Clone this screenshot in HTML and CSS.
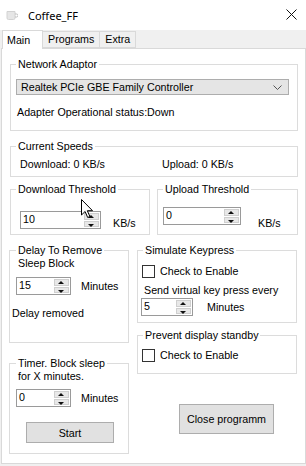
FILE: index.html
```html
<!DOCTYPE html>
<html>
<head>
    <title>Coffee_FF</title>
    <link rel="stylesheet" href="styles.css">
</head>
<body>
<div class="window">
    <div class="titlebar">
        <svg class="app-icon" width="12" height="9" viewBox="0 0 12 9">
            <path d="M1 0.5h8v6.5a1.5 1.5 0 0 1-1.5 1.5h-5a1.5 1.5 0 0 1-1.5-1.5z" fill="#e6e6e6" stroke="#d2d2d2"/>
            <path d="M9 3h1.5a1 1 0 0 1 0 3h-1.5" fill="none" stroke="#bdbdbd"/>
        </svg>
        <span class="title">Coffee_FF</span>
        <svg class="close" width="11" height="11" viewBox="0 0 11 11">
            <path d="M0.5 0.5l10 10M10.5 0.5l-10 10" stroke="#111" stroke-width="1"/>
        </svg>
    </div>

    <div class="tabs">
        <div class="tab active">Main</div>
        <div class="tab">Programs</div>
        <div class="tab">Extra</div>
    </div>

    <div class="panel">
        <!-- network adaptor -->
        <div class="group net">
            <div class="legend">Network Adaptor</div>
            <div class="combo">
                <span>Realtek PCIe GBE Family Controller</span>
                <svg width="9" height="5" viewBox="0 0 9 5"><path d="M0.5 0.5l4 4 4-4" fill="none" stroke="#555"/></svg>
            </div>
            <div class="status">Adapter Operational status:Down</div>
        </div>

        <!-- current speeds -->
        <div class="group speeds">
            <div class="legend">Current Speeds</div>
            <div class="speed-row">
                <span class="dl">Download: 0 KB/s</span>
                <span>Upload: 0 KB/s</span>
            </div>
        </div>

        <!-- thresholds -->
        <div class="threshold-row">
            <div class="group thr-down">
                <div class="legend">Download Threshold</div>
                <div class="field">
                    <div class="spin w81">
                        <span class="val">10</span>
                        <div class="spin-btns"><i class="up"></i><i class="down"></i></div>
                    </div>
                    <span class="unit">KB/s</span>
                </div>
            </div>
            <div class="group thr-up">
                <div class="legend">Upload Threshold</div>
                <div class="field">
                    <div class="spin w78">
                        <span class="val">0</span>
                        <div class="spin-btns"><i class="up"></i><i class="down"></i></div>
                    </div>
                    <span class="unit">KB/s</span>
                </div>
            </div>
        </div>

        <div class="columns">
            <div class="col-left">
                <div class="group delay">
                    <div class="legend two">Delay To Remove<br>Sleep Block</div>
                    <div class="field">
                        <div class="spin w55">
                            <span class="val">15</span>
                            <div class="spin-btns"><i class="up"></i><i class="down"></i></div>
                        </div>
                        <span class="unit">Minutes</span>
                    </div>
                    <div class="delay-note">Delay removed</div>
                </div>

                <div class="group timer">
                    <div class="legend two">Timer. Block sleep<br>for X minutes.</div>
                    <div class="field">
                        <div class="spin w55">
                            <span class="val">0</span>
                            <div class="spin-btns"><i class="up"></i><i class="down"></i></div>
                        </div>
                        <span class="unit">Minutes</span>
                    </div>
                    <button class="btn start">Start</button>
                </div>
            </div>

            <div class="col-right">
                <div class="group keypress">
                    <div class="legend">Simulate Keypress</div>
                    <label class="check"><span class="box"></span>Check to Enable</label>
                    <div class="send">Send virtual key press every</div>
                    <div class="field">
                        <div class="spin w52">
                            <span class="val">5</span>
                            <div class="spin-btns"><i class="up"></i><i class="down"></i></div>
                        </div>
                        <span class="unit">Minutes</span>
                    </div>
                </div>

                <div class="group standby">
                    <div class="legend">Prevent display standby</div>
                    <label class="check"><span class="box"></span>Check to Enable</label>
                </div>

                <button class="btn close-btn">Close programm</button>
            </div>
        </div>
    </div>

    <!-- mouse pointer sitting over the download spinner -->
    <svg class="cursor" width="12" height="19" viewBox="0 0 12 19">
        <path d="M0.5 0.5v15.5l3.6-3.5 2.6 6 2.2-1-2.6-5.8h5.2z" fill="#fff" stroke="#000" stroke-linejoin="round"/>
    </svg>
</div>
</body>
</html>
```

FILE: styles.css
```css
* {
    box-sizing: border-box;
}

body {
    margin: 0;
    font-family: "Liberation Sans", Arial, sans-serif;
    font-size: 10.7px;
    color: #000;
}

.window {
    position: relative;
    width: 306px;
    height: 466px;
    background-color: #f0f0f0;
    overflow: hidden;
}

/* title bar */
.titlebar {
    height: 30px;
    background-color: #fff;
    display: flex;
    align-items: center;
    padding-left: 6px;
}

.app-icon {
    margin-top: 1px;
}

.title {
    margin-left: 10px;
    font-family: "Noto Sans", sans-serif;
    font-size: 11px;
}

.close {
    margin-left: auto;
    margin-right: 9px;
    margin-top: -2px;
}

/* tabs */
.tabs {
    display: flex;
    height: 18px;
    padding-left: 2px;
    position: relative;
    z-index: 1;
}

.tab {
    height: 17px;
    margin-top: 1px;
    padding: 0 5px;
    line-height: 15px;
    border: 1px solid #d9d9d9;
    border-left: none;
    background-color: #f0f0f0;
}

.tab.active {
    height: 19px;
    margin-top: 0;
    width: 41px;
    padding-left: 4px;
    line-height: 19px;
    border-left: 1px solid #d9d9d9;
    border-bottom: none;
    background-color: #fff;
}

.panel {
    margin-left: 1px;
    width: 305px;
    height: 416px;
    border: 1px solid #d9d9d9;
    background-color: #fff;
}

/* group boxes */
.group {
    border: 1px solid #dcdcdc;
}

.legend {
    width: fit-content;
    margin: -8px 0 0 5px;
    padding: 0 2px;
    line-height: 14px;
    background-color: #fff;
}

.legend.two {
    margin-top: -7px;
    margin-left: 6px;
    line-height: 13px;
}

.net {
    margin: 15px 0 0 8px;
    width: 288px;
    height: 67px;
}

.combo {
    margin: 8px 0 0 5px;
    width: 273px;
    height: 16px;
    border: 1px solid #adadad;
    background-color: #e5e5e5;
    display: flex;
    align-items: center;
    justify-content: space-between;
    padding: 0 6px 0 4px;
}

.status {
    margin: 10px 0 0 6px;
    line-height: 14px;
}

.speeds {
    margin: 15px 0 0 8px;
    width: 288px;
    height: 31px;
}

.speed-row {
    display: flex;
    margin: 4px 0 0 9px;
    line-height: 14px;
}

.dl {
    width: 142px;
}

.threshold-row {
    display: flex;
    gap: 7px;
    margin: 12px 0 0 8px;
}

.thr-down {
    width: 140px;
    height: 46px;
}

.thr-up {
    width: 141px;
    height: 46px;
}

/* spinners */
.field {
    display: flex;
    align-items: center;
}

.spin {
    height: 18px;
    border: 1px solid #9a9a9a;
    background-color: #fff;
    display: flex;
    justify-content: space-between;
}

.w81 { width: 81px; }
.w78 { width: 78px; }
.w55 { width: 55px; }
.w52 { width: 52px; }

.val {
    padding-left: 2px;
    line-height: 15px;
}

.spin-btns {
    width: 15px;
    margin: 1px;
    display: flex;
    flex-direction: column;
    gap: 1px;
}

.spin-btns i {
    flex: 1;
    background-color: #e8e8e8;
    border: 1px solid #cfcfcf;
    position: relative;
}

.spin-btns i::after {
    content: "";
    position: absolute;
    left: 3px;
    top: 1px;
    border-left: 3px solid transparent;
    border-right: 3px solid transparent;
}

.spin-btns .up::after {
    border-bottom: 3px solid #111;
}

.spin-btns .down::after {
    top: 2px;
    border-top: 3px solid #111;
}

.thr-down .field {
    margin: 15px 0 0 9px;
}

.thr-down .unit {
    margin: 5px 0 0 12px;
}

.thr-up .field {
    margin: 7px 0 0 5px;
}

.thr-up .unit {
    margin: 14px 0 0 17px;
}

.columns {
    display: flex;
    margin-top: 15px;
}

.col-left {
    margin-left: 7px;
    width: 120px;
}

.col-right {
    margin-left: 8px;
    width: 160px;
}

.delay {
    height: 93px;
}

.delay .field {
    margin: 7px 0 0 6px;
}

.delay .unit,
.timer .unit {
    margin-left: 10px;
}

.delay-note {
    margin: 11px 0 0 2px;
    line-height: 14px;
}

.timer {
    margin-top: 20px;
    height: 91px;
}

.timer .field {
    margin: 6px 0 0 6px;
}

/* buttons */
.btn {
    display: block;
    font: inherit;
    color: #000;
    background-color: #e1e1e1;
    border: 1px solid #adadad;
    padding: 0;
}

.start {
    margin: 15px 0 0 16px;
    width: 88px;
    height: 21px;
}

.close-btn {
    margin: 30px 0 0 42px;
    width: 95px;
    height: 30px;
}

/* checkboxes */
.check {
    display: flex;
    align-items: center;
    gap: 5px;
    line-height: 14px;
}

.box {
    width: 13px;
    height: 13px;
    border: 1px solid #333;
    background-color: #fff;
}

.keypress {
    height: 73px;
}

.keypress .check {
    margin: 7px 0 0 4px;
}

.send {
    margin: 5px 0 0 6px;
    line-height: 14px;
}

.keypress .field {
    margin: 1px 0 0 3px;
}

.keypress .unit {
    margin-left: 14px;
}

.standby {
    margin-top: 12px;
    height: 39px;
}

.standby .check {
    margin: 6px 0 0 4px;
}

.cursor {
    position: absolute;
    left: 81px;
    top: 199px;
}
```
